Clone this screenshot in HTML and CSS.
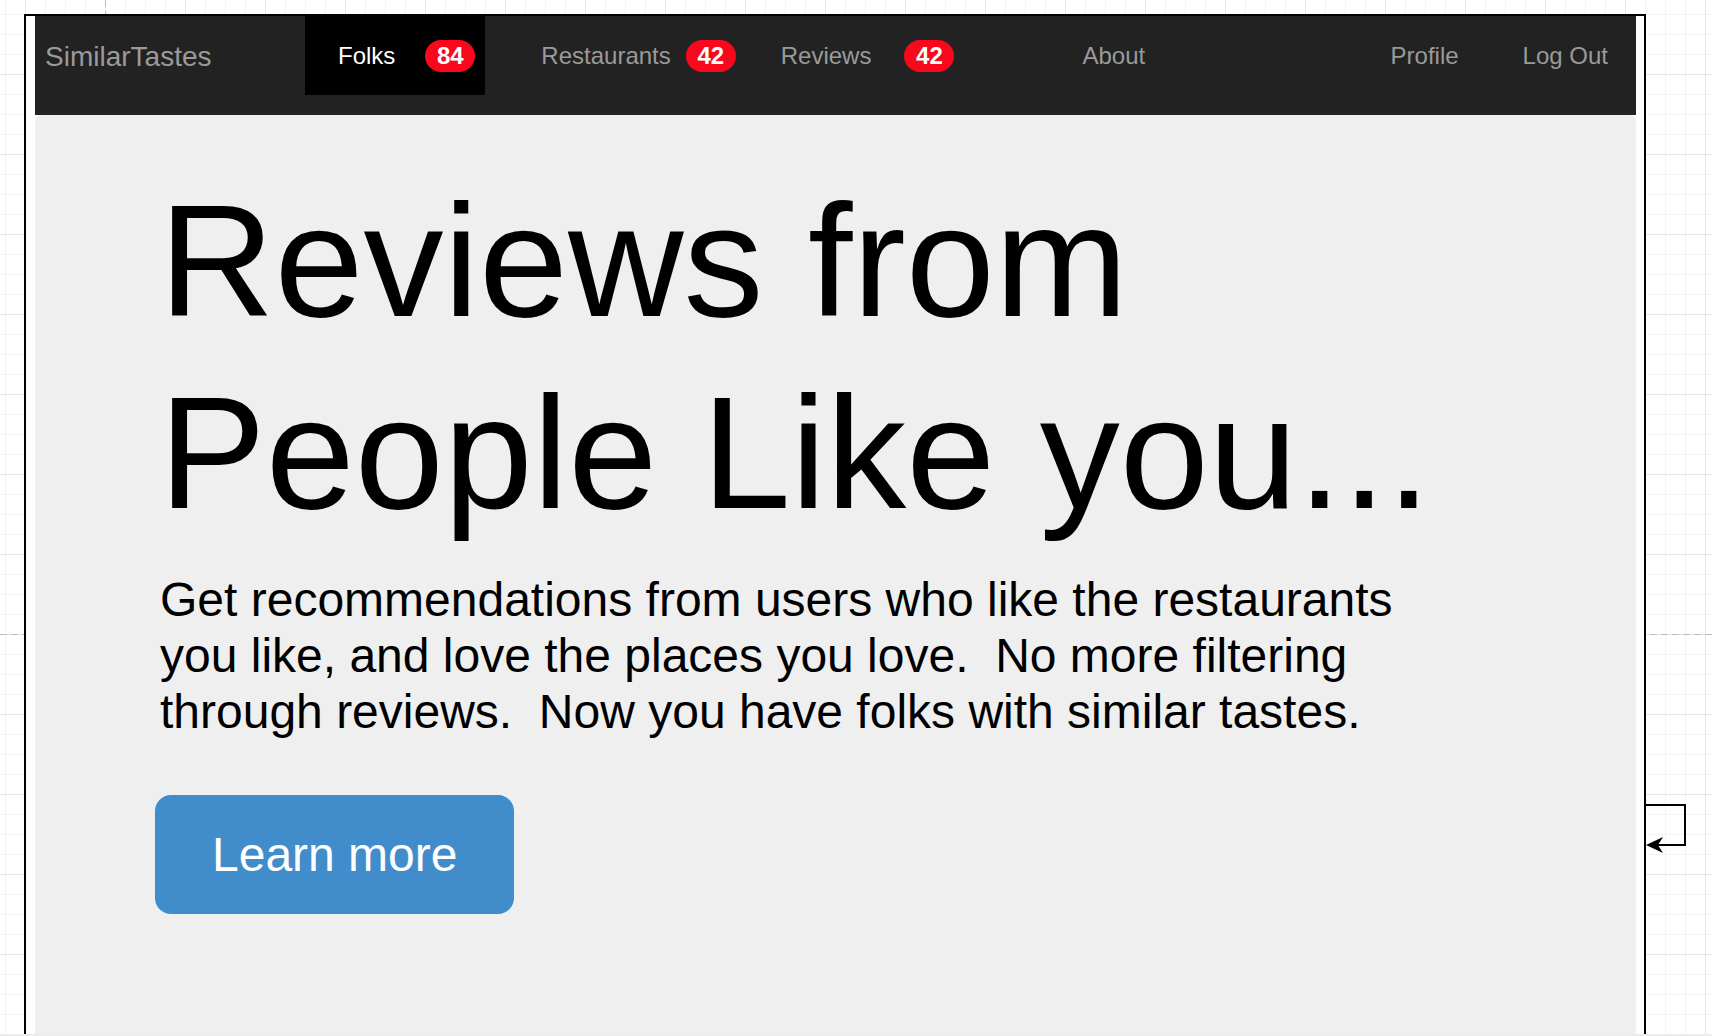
FILE: index.html
```html
<!DOCTYPE html>
<html lang="en">
<head>
<meta charset="utf-8">
<title>SimilarTastes</title>
<link rel="stylesheet" href="styles.css">
</head>
<body>
<div class="canvas">
  <div class="pagebreak pagebreak-v"></div>
  <div class="pagebreak pagebreak-h"></div>

  <div class="frame">
    <nav class="navbar">
      <a class="brand" href="#">SimilarTastes</a>
      <a class="nav-item active" href="#">Folks<span class="badge badge-folks">84</span></a>
      <a class="nav-item item-restaurants" href="#">Restaurants<span class="badge badge-restaurants">42</span></a>
      <a class="nav-item item-reviews" href="#">Reviews<span class="badge badge-reviews">42</span></a>
      <a class="nav-item item-about" href="#">About</a>
      <a class="nav-item item-profile" href="#">Profile</a>
      <a class="nav-item item-logout" href="#">Log Out</a>
    </nav>

    <section class="jumbotron">
      <h1 class="hero-title">Reviews from People Like you...</h1>
      <p class="hero-text">Get recommendations from users who like the restaurants you like, and love the places you love.&nbsp; No more filtering through reviews.&nbsp; Now you have folks with similar tastes.</p>
      <a class="btn-learn" href="#">Learn more</a>
    </section>
  </div>

  <svg class="connector" width="48" height="60" viewBox="0 0 48 60">
    <path d="M0 7 H41 V47 H12" fill="none" stroke="#000" stroke-width="2"/>
    <path d="M2 47 L19 39 L14 47 L19 55 Z" fill="#000"/>
  </svg>
</div>
</body>
</html>
```

FILE: styles.css
```css
* {
  box-sizing: border-box;
}

html, body {
  margin: 0;
  padding: 0;
}

body {
  background: #ececec;
  font-family: "Liberation Sans", Arial, Helvetica, sans-serif;
  overflow: hidden;
}

.canvas {
  position: relative;
  height: 1034px;
  overflow: hidden;
  background-color: #ffffff;
  background-image:
    linear-gradient(to right, #e6e6e6 1px, transparent 1px),
    linear-gradient(to bottom, #e6e6e6 1px, transparent 1px),
    linear-gradient(to right, #f3f3f3 1px, transparent 1px),
    linear-gradient(to bottom, #f3f3f3 1px, transparent 1px);
  background-size: 80px 80px, 80px 80px, 20px 20px, 20px 20px;
  background-position: 25px 0, 0 74px, 5px 0, 0 14px;
  display: flex;
  flex-direction: column;
}

.pagebreak {
  position: absolute;
}

.pagebreak-v {
  left: 105px;
  top: 0;
  width: 1px;
  height: 100%;
  background: repeating-linear-gradient(to bottom, #bdbdbd 0 7px, transparent 7px 11px);
}

.pagebreak-h {
  left: 0;
  top: 634px;
  width: 100%;
  height: 1px;
  background: repeating-linear-gradient(to right, #bdbdbd 0 7px, transparent 7px 11px);
}

.frame {
  position: relative;
  z-index: 1;
  margin: 14px 0 0 24px;
  width: 1622px;
  flex: 1;
  border: 2px solid #000;
  border-bottom: none;
  padding: 0 8px 0 9px;
  background: #ffffff;
  display: flex;
  flex-direction: column;
}

/* Navbar */
.navbar {
  height: 99px;
  background: #222222;
  display: flex;
  align-items: flex-start;
  padding-right: 28px;
}

.brand {
  width: 270px;
  height: 79px;
  padding: 3px 0 0 10px;
  display: flex;
  align-items: center;
  font-size: 28px;
  color: #9a9a9a;
  text-decoration: none;
}

.nav-item {
  height: 79px;
  display: flex;
  align-items: center;
  font-size: 24px;
  color: #9a9a9a;
  text-decoration: none;
  white-space: nowrap;
}

.nav-item.active {
  background: #000000;
  color: #ffffff;
  padding: 0 10px 0 33px;
}

.item-restaurants { margin-left: 56px; }
.item-reviews { margin-left: 45px; }
.item-about { margin-left: 128px; }
.item-profile { margin-left: auto; }
.item-logout { margin-left: 64px; }

.badge {
  display: inline-flex;
  align-items: center;
  justify-content: center;
  width: 50px;
  height: 32px;
  border-radius: 16px;
  background: #f8081c;
  color: #ffffff;
  font-size: 24px;
  font-weight: bold;
}

.badge-folks { margin-left: 30px; }
.badge-restaurants { margin-left: 15px; }
.badge-reviews { margin-left: 33px; }

/* Jumbotron */
.jumbotron {
  flex: 1;
  background: #efefef;
  border-radius: 6px 6px 0 0;
  padding: 50px 120px 0 120px;
}

.hero-title {
  margin: 0 0 0 4px;
  font-size: 160px;
  line-height: 192px;
  font-weight: normal;
  color: #000000;
}

.hero-text {
  margin: 23px 0 0 5px;
  max-width: 1270px;
  font-size: 48px;
  line-height: 56px;
  color: #000000;
}

.btn-learn {
  margin-top: 55px;
  display: inline-flex;
  align-items: center;
  height: 119px;
  padding: 0 57px;
  border-radius: 16px;
  background: #418dcb;
  color: #ffffff;
  font-size: 48px;
  text-decoration: none;
}

.connector {
  position: absolute;
  left: 1644px;
  top: 798px;
  z-index: 2;
}
```
